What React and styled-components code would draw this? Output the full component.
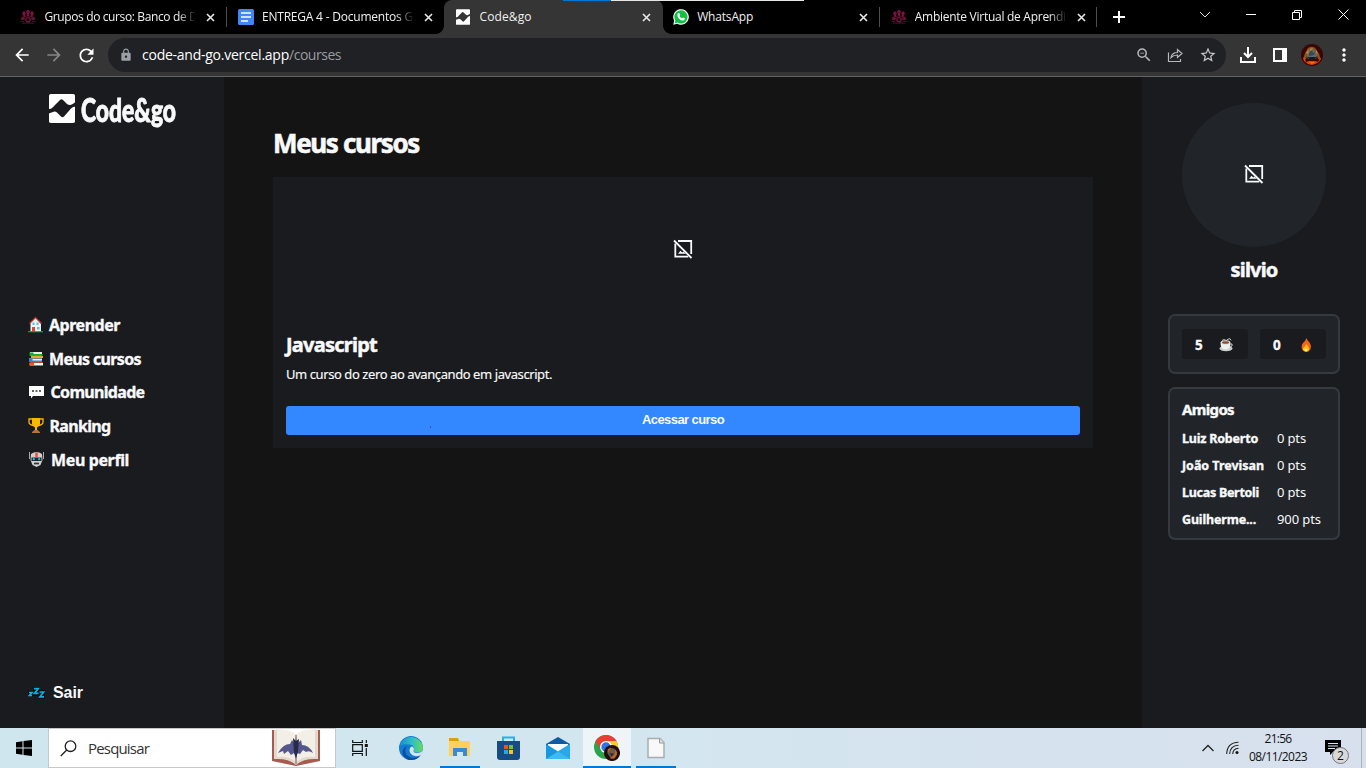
import React, { useLayoutEffect, useRef } from "react";
import styled, { createGlobalStyle, css } from "styled-components";
import {
  MdArrowBack,
  MdArrowForward,
  MdRefresh,
  MdLock,
  MdZoomOut,
  MdStarBorder,
  MdMoreVert,
} from "react-icons/md";

const c = {
  side: "#1a1b1e",
  main: "#141414",
  panel: "#212529",
  border: "#343a40",
  text: "#f8f9fa",
  blue: "#3388ff",
};
const appFont = `"Noto Sans", "Open Sans", sans-serif`;
const systemFont = `"Open Sans", "Noto Sans", sans-serif`;

const GlobalStyle = createGlobalStyle`
  *, *::before, *::after { box-sizing: border-box; }
  body { margin: 0; background: ${c.main}; overflow: hidden; }
  svg { display: block; flex: none; }
`;

/* Text whose tracking (or horizontal scale) is computed so it spans a given width. */
const FitSpan = styled.span`
  display: inline-block;
  justify-self: start;
  white-space: pre;
  transform-origin: 0 50%;
`;
function Fit({ w, squeeze, children }) {
  const ref = useRef(null);
  useLayoutEffect(() => {
    const el = ref.current;
    el.style.letterSpacing = "0px";
    el.style.transform = "none";
    const natural = el.getBoundingClientRect().width;
    if (squeeze) {
      el.style.transform = `scaleX(${w / natural})`;
      el.style.marginRight = `${w - natural}px`;
    } else {
      el.style.letterSpacing = `${(w - natural) / el.textContent.length}px`;
    }
  }, [w, squeeze, children]);
  return <FitSpan ref={ref}>{children}</FitSpan>;
}

const Screen = styled.div`
  width: 1366px;
  height: 768px;
  display: flex;
  flex-direction: column;
  position: relative;
  font-family: ${appFont};
  color: ${c.text};
`;

/* ---------- browser ---------- */
const TabStrip = styled.div`
  height: 34px;
  flex: none;
  display: flex;
  background: #000;
  padding-left: 8.4px;
  font-family: ${systemFont};
`;
const Tab = styled.div`
  width: 217.6px;
  height: 34px;
  flex: none;
  display: flex;
  align-items: center;
  padding-left: 12px;
  gap: 8px;
  position: relative;
  isolation: isolate;
  ${(p) =>
    p.$divider &&
    css`
      &::after {
        content: "";
        position: absolute;
        right: -0.9px;
        top: 7px;
        width: 1px;
        height: 20px;
        background: #4d4d4d;
      }
    `}
  ${(p) =>
    p.$active &&
    css`
      &::before {
        content: "";
        position: absolute;
        z-index: -1;
        inset: 0 -1.4px 0 0.4px;
        background: #353535;
        border-radius: 8px 8px 0 0;
      }
      &::after {
        content: "";
        position: absolute;
        z-index: -1;
        left: -7.6px;
        right: -9.4px;
        bottom: 0;
        height: 8px;
        background:
          radial-gradient(circle at 0 0, transparent 7.5px, #353535 8px) 0 0 / 8px 8px no-repeat,
          radial-gradient(circle at 100% 0, transparent 7.5px, #353535 8px) 100% 0 / 8px 8px no-repeat;
      }
    `}
`;
const TabTitle = styled.div`
  width: 152px;
  overflow: hidden;
  font-size: 12px;
  line-height: 18px;
  color: #f0f0f0;
  white-space: nowrap;
  ${(p) => p.$fade && css`mask-image: linear-gradient(90deg, #000 134px, transparent 152px);`}
`;
const TabClose = styled.svg`
  margin-left: 2px;
`;
const NewTab = styled.div`
  width: 45px;
  display: grid;
  place-items: center;
`;
const WindowButtons = styled.div`
  margin-left: auto;
  display: flex;
  height: 29px;
`;
const WindowButton = styled.div`
  width: 46px;
  display: grid;
  place-items: center;
`;
const WindowEdge = styled.div`
  position: absolute;
  top: 0;
  left: 563px;
  width: 241px;
  height: 1px;
  background: linear-gradient(90deg, #0078d7 48px, #e6e6e6 48px);
`;
const Toolbar = styled.div`
  height: 43px;
  flex: none;
  display: flex;
  align-items: center;
  padding: 0 11px 0 12px;
  background: #353535;
  border-bottom: 1px solid #636363;
`;
const ToolButton = styled.div`
  width: ${(p) => p.$w || 32}px;
  display: flex;
  justify-content: ${(p) => p.$align || "flex-start"};
  color: ${(p) => p.$color || "#fff"};
`;
const AddressBar = styled.div`
  width: 1118px;
  height: 34px;
  display: flex;
  align-items: center;
  padding: 0 9px 0 11px;
  border-radius: 17px;
  background: #202124;
  font: 14px/20px ${systemFont};
`;
const Url = styled.div`
  flex: 1;
  margin-left: 9px;
  color: #fff;
`;
const UrlPath = styled.span`
  color: #9a9ba0;
`;

/* ---------- page ---------- */
const Page = styled.div`
  height: 651px;
  display: flex;
  background: ${c.main};
`;
const Sidebar = styled.aside`
  width: 224px;
  flex: none;
  display: flex;
  flex-direction: column;
  background: ${c.side};
`;
const Brand = styled.div`
  height: 62px;
  display: flex;
  align-items: center;
  padding-left: 49px;
  gap: 6px;
`;
const BrandName = styled.div`
  padding-top: 3px;
  font: 900 32px/40px Lato, sans-serif;
  -webkit-text-stroke: 0.9px ${c.text};
`;
const Nav = styled.nav`
  padding: 169px 0 0 28px;
`;
const NavItem = styled.div`
  height: 33.7px;
  display: flex;
  align-items: center;
  gap: ${(p) => p.$gap}px;
  font: bold 16px/22px ${(p) => (p.$plain ? `"Liberation Sans", sans-serif` : appFont)};
  -webkit-text-stroke: ${(p) => (p.$plain ? 0 : 0.35)}px ${c.text};
  ${(p) => p.$bottom && css`margin: auto 0 18px 28px;`}
`;
const Content = styled.main`
  width: 918px;
  padding: 49px 49px 0;
`;
const Title = styled.h1`
  margin: 0 0 17px;
  font: bold 26px/34px ${appFont};
  -webkit-text-stroke: 0.6px ${c.text};
`;
const Card = styled.section`
  height: 271px;
  background: ${c.side};
`;
const CardImage = styled.div`
  height: 145px;
  padding-bottom: 1px;
  display: grid;
  place-items: center;
`;
const CardBody = styled.div`
  padding: 9px 13px 0;
`;
const CardTitle = styled.h2`
  margin: 0;
  font: bold 20px/28px ${appFont};
  -webkit-text-stroke: 0.5px ${c.text};
`;
const CardText = styled.p`
  margin: 5px 0 21px;
  font-size: 13px;
  line-height: 21px;
  -webkit-text-stroke: 0.15px ${c.text};
`;
const CardButton = styled.button`
  display: block;
  position: relative;
  width: 100%;
  height: 29px;
  padding: 0 0 2px;
  border: 0;
  border-radius: 3px;
  background: ${c.blue};
  color: ${c.text};
  font: bold 13px/20px "Liberation Sans", sans-serif;
  &::after {
    content: "";
    position: absolute;
    left: 144px;
    top: 20px;
    width: 1px;
    height: 2px;
    background: #4a45d8;
  }
`;
const Profile = styled.aside`
  width: 224px;
  padding: 26px 26px 0;
  background: ${c.side};
`;
const Avatar = styled.div`
  width: 144px;
  height: 144px;
  margin: 0 auto;
  padding-bottom: 2px;
  border-radius: 50%;
  background: ${c.panel};
  display: grid;
  place-items: center;
`;
const UserName = styled.h2`
  margin: 9px 0 30px;
  text-align: center;
  font: bold 20px/28px ${appFont};
  -webkit-text-stroke: 0.5px ${c.text};
`;
const Panel = styled.section`
  border: 2px solid ${c.border};
  border-radius: 7px;
  background: ${c.panel};
`;
const Stats = styled(Panel)`
  height: 60px;
  padding: 13px 12px;
  display: flex;
  gap: 12px;
`;
const Stat = styled.div`
  width: 66px;
  height: 30px;
  padding: 1px ${(p) => p.$end}px 0 13px;
  display: flex;
  align-items: center;
  justify-content: space-between;
  border-radius: 3px;
  background: ${c.side};
  font: bold 13.5px/20px ${appFont};
  -webkit-text-stroke: 0.3px ${c.text};
`;
const Friends = styled(Panel)`
  height: 153px;
  margin-top: 13px;
  padding: 9px 12px;
`;
const FriendsTitle = styled.h3`
  margin: 0 0 5px;
  font: bold 15px/22px ${appFont};
  -webkit-text-stroke: 0.4px ${c.text};
`;
const Friend = styled.div`
  height: 27px;
  display: grid;
  grid-template-columns: 95px 1fr;
  font-size: 13px;
  line-height: 27px;
`;
const FriendName = styled.b`
  font-size: 12.5px;
  -webkit-text-stroke: 0.35px ${c.text};
`;

/* ---------- taskbar ---------- */
const Taskbar = styled.footer`
  height: 40px;
  flex: none;
  display: flex;
  background: linear-gradient(90deg, #cfe6ee, #d3e6ef 45%, #d8e0ee);
  font-family: ${systemFont};
  color: #111;
`;
const StartButton = styled.div`
  width: 48px;
  display: grid;
  place-items: center;
`;
const SearchBox = styled.div`
  width: 288px;
  border: 1px solid #c8c8c8;
  background: #fff;
  display: flex;
  align-items: center;
  padding: 0 15px 0 11px;
  font-size: 15px;
  color: #333;
`;
const SearchText = styled.div`
  flex: 1;
  margin-left: 11px;
`;
const TaskButton = styled.div`
  width: ${(p) => p.$w || 48}px;
  margin-right: ${(p) => p.$gap || 0}px;
  display: grid;
  place-items: center;
  ${(p) => p.$active && css`background: #edf5f9;`}
  ${(p) => p.$open && css`box-shadow: inset 0 -2px #0078d7;`}
`;
const Tray = styled.div`
  margin-left: auto;
  display: flex;
  align-items: center;
`;
const Clock = styled.div`
  width: 60px;
  margin: 0 17px 0 9px;
  text-align: center;
  font-size: 12px;
  line-height: 18px;
  white-space: nowrap;
`;
const NoticeIcon = styled.div`
  width: 36px;
  height: 40px;
  position: relative;
  padding: 12px 0 0;
`;
const NoticeCount = styled.div`
  position: absolute;
  left: 7px;
  top: 19px;
  width: 17px;
  height: 17px;
  border: 1px solid #777;
  border-radius: 50%;
  background: #d9d9dc;
  font-size: 12px;
  line-height: 15px;
  text-align: center;
`;
const DesktopEdge = styled.div`
  width: 5px;
  height: 40px;
  border-left: 1px solid #aab2be;
`;

/* ---------- drawings ---------- */
const Crest = () => (
  <svg width="16" height="16" viewBox="0 0 16 16" fill="#7c1040">
    <path d="M7 1h2l1 2-1 1.500v2l1 1H6l1-1v-2L6 3zM3 2.500h2l.8 2L5 6l1 2H3.500L3 6 2 4.500zM13 2.500h-2l-.8 2L11 6l-1 2h2.500L13 6l1-1.500z" />
    <path d="M.8 9l2-1.500L5 9l-.5 2H1zM15.200 9l-2-1.500L11 9l.5 2H15z" opacity=".85" />
    <circle cx="8" cy="10.700" r="2.200" fill="none" stroke="#8e1243" strokeWidth="1.200" />
    <path d="M0 12h4v1H0zM12 12h4v1h-4zM2 13.600h12v1.200H2z" opacity=".6" />
  </svg>
);
const Docs = () => (
  <svg width="16" height="16"><rect width="16" height="16" rx="1.5" fill="#4285f4" /><path d="M3 4h10M3 8h10M3 12h7" stroke="#fff" strokeWidth="1.700" /></svg>
);
const LogoMark = ({ w = 26, h = 29, cut = c.side }) => (
  <svg width={w} height={h} viewBox="0 0 26 29">
    <rect width="26" height="29" rx="1.700" fill="#fff" />
    <path d="M0 15C3 15 4 13 5.500 11.500L11 6q1.500-1.500 3 0l4 4q2 1.500 4 .8 2.500-.8 4-2.500v4.500c-3 0-4 2-5.500 3.500L15 22.500q-1.500 1.500-3 0l-4-4q-2-1.500-4-.5-2.500.8-4 1.500z" fill={cut} />
  </svg>
);
const Whats = () => (
  <svg width="16" height="16" viewBox="0 0 16 16">
    <path d="M.2 15.800l1-4A7.800 7.800 0 1 1 4.200 14.800z" fill="#fff" />
    <path d="M1.600 14.400l.8-2.900A6.600 6.600 0 1 1 4.600 13.600z" fill="#12c143" />
    <path d="M5.300 4l1-.1.9 2-.8 1.200q.9 1.800 2.700 2.500l.9-1.100 2 1q0 1.700-1.700 2.100C7 11.500 4.500 8.500 4.400 5.900 4.400 5 4.800 4.300 5.300 4z" fill="#fff" />
  </svg>
);
const CloseX = () => (
  <TabClose width="9" height="9" viewBox="0 0 9 9"><path d="M1 1l7 7M8 1L1 8" stroke="#e8e8e8" strokeWidth="1.600" /></TabClose>
);
const NoImage = () => (
  <svg width="20" height="20" viewBox="0 0 20 20" fill="none" stroke={c.text} strokeWidth="1.800">
    <path d="M5 2h13.200v13M2.300 4.500v13.200h13" />
    <path d="M1 1.500L18.500 19" />
    <path d="M5 14.700l2.500-3 1.700 1.700 1-1 2.800 2.300z" fill={c.text} stroke="none" />
  </svg>
);
const House = () => (
  <svg width="16" height="17" viewBox="0 0 16 17">
    <path d="M2.500 7l5-5L13 8v8H2.500z" fill="#f3f3f3" />
    <path d="M1.500 7.500L7.500 1.500l6 6" fill="none" stroke="#c9382b" strokeWidth="1.200" />
    <path d="M4 11h3v5H4z" fill="#e04430" /><path d="M4.500 6.500h2V9h-2zM8.500 6.500h2V9h-2zM9 11h2.500v2.500H9z" fill="#4cc3ee" />
    <path d="M0 15.700h15" stroke="#15a52c" strokeWidth="1.200" />
  </svg>
);
const Books = () => (
  <svg width="16" height="16" viewBox="0 0 16 16">
    <path d="M2 1h12v3.500H2z" fill="#eee" /><path d="M1.500 1.500h4V3h9v1.500h-13z" fill="#18a832" />
    <path d="M3 5h12v2H3z" fill="#d6b32c" />
    <path d="M1 7.500h13V11H1z" fill="#e9f1f6" /><path d="M1 7.500h3.500V9.500H14V11H1z" fill="#2786d1" />
    <path d="M2 11.300h13V15H2q-2-1.800 0-3.700z" fill="#ef5721" /><path d="M6 12h9v2H6z" fill="#fff" />
  </svg>
);
const Speech = () => (
  <svg width="17" height="16" viewBox="0 0 17 16"><path d="M1 2h15v10H5l-2 2.500V12H1z" fill="#fff" /><path d="M4 6.200h2v1.600H4zM7.500 6.200h2v1.600h-2zM11 6.200h2v1.600h-2z" fill="#333" /></svg>
);
const Trophy = () => (
  <svg width="16" height="17" viewBox="0 0 16 17">
    <path d="M4 1h8v6q-.5 3-3 3.500V14H7v-3.500Q4.500 10 4 7z" fill="#fdb602" />
    <path d="M4 2H1v3q0 2.500 4 3.500M12 2h3v3q0 2.500-4 3.500" fill="none" stroke="#fdb602" strokeWidth="1.300" />
    <path d="M6.500 13h3l2.500 2v1H4v-1z" fill="#b67430" />
  </svg>
);
const Robot = () => (
  <svg width="17" height="17" viewBox="0 0 17 17">
    <path d="M1.500 1v7M15.500 1v7" stroke="#aaa" /><path d="M3 3q5.500-4 11 0l.5 6-2 5-4 2-4-2-2-5z" fill="#cfcfcf" />
    <path d="M7.300 1.500h2.400V6H7.300z" fill="#f04a2e" /><path d="M3.500 6.500h10v3.500h-10z" fill="#20242b" /><circle cx="5.800" cy="8.200" r="1.100" fill="#23c4ee" /><circle cx="11.200" cy="8.200" r="1.100" fill="#23c4ee" />
    <path d="M6 12.500h5" stroke="#333" strokeWidth="1.700" />
  </svg>
);
const Zzz = () => (
  <svg width="17" height="12" viewBox="0 0 17 12" fill="none">
    <path d="M0 4h5.500V0H12v3h5v8.500h-6.500V9H0z" fill="#080808" />
    <path d="M1 5.500h3L1.300 8.500H4M6 1.700h4.200L6.400 6.400h4.200M11.500 5h4.200l-3.900 4.800h4.200" stroke="#0bb3e2" strokeWidth="1.700" />
  </svg>
);
const Coffee = () => (
  <svg width="14" height="14" viewBox="0 0 14 14">
    <ellipse cx="7" cy="10.500" rx="6.500" ry="2.800" fill="#ccc" /><path d="M1.500 4.500h10q0 7-5 7t-5-7z" fill="#efefef" />
    <ellipse cx="6.500" cy="4.500" rx="4.800" ry="2.200" fill="#ddd" /><ellipse cx="6.500" cy="4.500" rx="3.500" ry="1.300" fill="#8e4b2c" />
    <path d="M11 6h2v2l-2 1M3 2.500Q5 .8 6 2t3-.7 3 1" stroke="#ccc" fill="none" />
  </svg>
);
const Flame = () => (
  <svg width="14" height="16" viewBox="0 0 14 16">
    <path d="M7.500 1Q8 3.500 10.500 5.500q2.500 4 .5 7.500-3.500 4-7.500 0Q1.500 9 4 6q2.500-2 3.500-5z" fill="#f5641d" />
    <path d="M7 7q3.500 3 3 6-3 3-6 0-.5-2 1.200-3Q7 9 7 7z" fill="#ffc20d" /><circle cx="7" cy="13" r="1.300" fill="#fff59b" />
  </svg>
);
const Warrior = ({ s = 22 }) => (
  <svg width={s} height={s} viewBox="0 0 22 22">
    <circle cx="11" cy="11" r="11" fill="#3a0505" />
    <path d="M2 15Q4 8 7 4q5-3 8 1 4 5 5 11l-3-1-1-3H6l-1 3z" fill="#8f5212" />
    <path d="M6 12Q6 6 10 4q4 0 6 7l-1 4H7z" fill="#5d6c72" />
    <path d="M5 9l3-4-1 5zM9 5l3-1-2 3zM15 6l2 4-2-1z" fill="#d98a24" />
    <path d="M8 9l3-3 1 3 2-1-1 3-5 1z" fill="#3c484d" />
    <path d="M2 14l2 0 1 4 3-1 6 0 3 1 2-4 1 0-2 4-4 2-3 1-4-1-4-3z" fill="#d8430f" />
    <path d="M7 13h8l-1 3H8z" fill="#17191b" /><path d="M8 18h6l-3 2z" fill="#f1701c" />
  </svg>
);
const BookArt = () => (
  <svg width="48" height="38" viewBox="0 0 48 38">
    <path d="M0 1h7l17 5L41 1h7v31L24 37 0 32z" fill="#a65a50" />
    <path d="M2 1Q17 0 24 6 31 0 46 1v29q-15-1-22 6Q17 29 2 30z" fill="#e0d9ce" />
    <path d="M5 1Q17 0 24 6v27Q17 27 5 28zM43 1Q31 0 24 6v27q7-6 19-5z" fill="#f3eee6" />
    <path d="M24 6v29" stroke="#aaa096" strokeWidth="2" />
    <path d="M6 24q5-9 12-9l2-4 3 4 1-7 1 7 4-4 1 5q7 0 11 8-4-3-7-1l-3-2-3 4-3-1-1 6-2-6-3 2-3-4-4 3-1-3z" fill="#55568c" />
    <path d="M21 9l3 3 3-2-1 13-2 6-2-6z" fill="#29294a" />
  </svg>
);
const Edge = () => (
  <svg width="24" height="24" viewBox="0 0 24 24">
    <defs><linearGradient id="edgeTop"><stop stopColor="#168ed0" /><stop offset=".55" stopColor="#32bfc4" /><stop offset="1" stopColor="#69dc55" /></linearGradient></defs>
    <circle cx="12" cy="12" r="12" fill="#137bd0" />
    <path d="M.5 10A12 12 0 0 1 24 11.500q0 5-6 5-4 0-3.200-2.500Q16 9 10 8.500 4 7.500.5 10z" fill="url(#edgeTop)" />
    <path d="M8 10q-4 6 1 10 5 4 12 0-4 5-12 3.700Q2 20 4 14q1-3 4-4z" fill="#0b4f9d" />
    <path d="M12 10.500q3.500 0 2.800 3.500Q13.500 17 18 17q4 0 6-3-.3 3.500-2.300 5.300Q15 21.500 12 18t0-7.500z" fill="#d2e6ee" />
  </svg>
);
const Explorer = () => (
  <svg width="22" height="20" viewBox="0 0 22 20"><path d="M0 1h9l2 2h10v15H0z" fill="#ffd15c" /><path d="M0 0h9l1 3H0z" fill="#dd9d0c" /><path d="M4 18v-8h14v8h-4v-4H8v4z" fill="#368bd5" /><path d="M8 14h6v5H8z" fill="#d2e6ee" /></svg>
);
const Store = () => (
  <svg width="23" height="24" viewBox="0 0 23 24"><path d="M6 6V1.500h11V6" fill="none" stroke="#28b0e8" strokeWidth="2" /><path d="M0 5h23v16q0 3-3 3H3q-3 0-3-3z" fill="#184b82" /><path d="M7 9h4v4H7z" fill="#f45126" /><path d="M12 9h4v4h-4z" fill="#81bd23" /><path d="M7 14h4v4H7z" fill="#22aaf0" /><path d="M12 14h4v4h-4z" fill="#ffc11b" /></svg>
);
const Mail = () => (
  <svg width="24" height="23" viewBox="0 0 24 23"><path d="M0 7l12-7 12 7v5H0z" fill="#0c5ba5" /><path d="M2 7h20v7L12 18 2 13z" fill="#f7fbfd" /><path d="M0 7l24 15H0z" fill="#1697e0" /><path d="M24 7v15H6L0 22z" fill="#3abbf3" /><path d="M24 7L12 14.500 24 22z" fill="#26a8e9" /></svg>
);
const Chrome = () => (
  <svg width="26" height="26" viewBox="0 0 26 26">
    <circle cx="12" cy="12" r="12" fill="#2ba24c" /><path d="M1.600 6A12 12 0 0 1 22.400 6H12L7 15z" fill="#e8402f" /><path d="M12 6h10.400A12 12 0 0 1 12 24l5-9z" fill="#fccb25" />
    <circle cx="12" cy="12" r="6" fill="#fff" /><circle cx="12" cy="12" r="4.700" fill="#2f74e6" />
    <g transform="translate(10 10) scale(.73)"><circle cx="11" cy="11" r="11" fill="#210c0a" /><path d="M5 12Q3 5 9 4q7 0 9 6l-3 7-5 2z" fill="#6c594c" /><path d="M5 6l5-3-4 7zM16 6l2 7-4 6-6-1 6-4z" fill="#c2661b" /><path d="M8 11l6 1-4 4z" fill="#252a2d" /></g>
  </svg>
);
const FileIcon = () => (
  <svg width="18" height="22" viewBox="0 0 18 22"><path d="M1 1.500h12l4 4v15H1z" fill="#f8f8f8" stroke="#a7adb1" strokeWidth="1.500" /><path d="M12.500 1.500V6H17" fill="#ddd" stroke="#969ca0" /></svg>
);

const tabs = [
  { icon: <Crest />, title: "Grupos do curso: Banco de D", w: 153, fade: true, divider: true },
  { icon: <Docs />, title: "ENTREGA 4 - Documentos G", w: 151, fade: true },
  { icon: <LogoMark w={14} h={16} cut="#353535" />, title: "Code&go", w: 52, active: true },
  { icon: <Whats />, title: "WhatsApp", w: 56, divider: true },
  { icon: <Crest />, title: "Ambiente Virtual de Aprendi", w: 151, fade: true, divider: true },
];
const links = [
  { icon: <House />, label: "Aprender", w: 71, gap: 5 },
  { icon: <Books />, label: "Meus cursos", w: 92, gap: 5 },
  { icon: <Speech />, label: "Comunidade", w: 94, gap: 5.5 },
  { icon: <Trophy />, label: "Ranking", w: 61, gap: 5.5 },
  { icon: <Robot />, label: "Meu perfil", w: 78, gap: 6 },
];
const friends = [
  ["Luiz Roberto", 76, "0 pts", 29],
  ["João Trevisan", 82, "0 pts", 29],
  ["Lucas Bertoli", 77, "0 pts", 29],
  ["Guilherme...", 74, "900 pts", 44],
];

export default function App() {
  return (
    <Screen>
      <GlobalStyle />
      <TabStrip>
        {tabs.map((t, i) => (
          <Tab key={i} $active={t.active} $divider={t.divider}>
            <svg width="16" height="16">{t.icon}</svg>
            <TabTitle $fade={t.fade}><Fit w={t.w}>{t.title}</Fit></TabTitle>
            <CloseX />
          </Tab>
        ))}
        <NewTab><svg width="12" height="12"><path d="M6 0v12M0 6h12" stroke="#fff" strokeWidth="2" /></svg></NewTab>
        <WindowButtons>
          <WindowButton><svg width="12" height="8"><path d="M1 1l5 5 5-5" fill="none" stroke="#ddd" /></svg></WindowButton>
          <WindowButton><svg width="10" height="2"><path d="M0 .5h10" stroke="#fff" /></svg></WindowButton>
          <WindowButton><svg width="10" height="10" fill="none" stroke="#fff"><path d="M.5 2.500h7v7h-7zM2.500 2.500v-2h7v7h-2" /></svg></WindowButton>
          <WindowButton><svg width="11" height="11"><path d="M.5.5l10 10M10.500.5l-10 10" stroke="#fff" /></svg></WindowButton>
        </WindowButtons>
      </TabStrip>
      <WindowEdge />
      <Toolbar>
        <ToolButton><MdArrowBack size={20} /></ToolButton>
        <ToolButton $color="#868686"><MdArrowForward size={20} /></ToolButton>
        <ToolButton><MdRefresh size={21} /></ToolButton>
        <AddressBar>
          <ToolButton $w={14} $color="#9aa0a6"><MdLock size={14} /></ToolButton>
          <Url><Fit w={147}>code-and-go.vercel.app</Fit><UrlPath><Fit w={52}>/courses</Fit></UrlPath></Url>
          <ToolButton $color="#b6b8bb"><MdZoomOut size={18} /></ToolButton>
          <ToolButton $color="#b6b8bb">
            <svg width="17" height="16" viewBox="0 0 17 16" fill="none" stroke="currentColor" strokeWidth="1.200"><path d="M1.500 5.500v9h12V12M4 10.500Q5 5.500 10.500 5.500V2.500l4.500 4-4.500 4V8Q6.500 8 4 10.500z" /></svg>
          </ToolButton>
          <ToolButton $w={18} $color="#c6c8ca"><MdStarBorder size={18} /></ToolButton>
        </AddressBar>
        <ToolButton $w={44} $align="center">
          <svg width="16" height="16" fill="none" stroke="#fff" strokeWidth="2"><path d="M8 0v10M4 6l4 4 4-4M1 10v5h14v-5" /></svg>
        </ToolButton>
        <ToolButton $w={20} $align="center"><svg width="14" height="14"><path d="M1 1h12v12H1z" fill="none" stroke="#fff" strokeWidth="2" /><path d="M9 0h5v14H9z" fill="#fff" /></svg></ToolButton>
        <ToolButton $w={44} $align="center"><Warrior /></ToolButton>
        <ToolButton $w={20} $align="center"><MdMoreVert size={20} /></ToolButton>
      </Toolbar>

      <Page>
        <Sidebar>
          <Brand><LogoMark /><BrandName><Fit w={95} squeeze>Code&amp;go</Fit></BrandName></Brand>
          <Nav>
            {links.map((l) => (
              <NavItem key={l.label} $gap={l.gap}>{l.icon}<Fit w={l.w}>{l.label}</Fit></NavItem>
            ))}
          </Nav>
          <NavItem $bottom $plain $gap={8}><Zzz /><Fit w={30}>Sair</Fit></NavItem>
        </Sidebar>
        <Content>
          <Title><Fit w={146}>Meus cursos</Fit></Title>
          <Card>
            <CardImage><NoImage /></CardImage>
            <CardBody>
              <CardTitle><Fit w={91}>Javascript</Fit></CardTitle>
              <CardText><Fit w={266}>Um curso do zero ao avançando em javascript.</Fit></CardText>
              <CardButton><Fit w={82}>Acessar curso</Fit></CardButton>
            </CardBody>
          </Card>
        </Content>
        <Profile>
          <Avatar><NoImage /></Avatar>
          <UserName><Fit w={47}>silvio</Fit></UserName>
          <Stats>
            <Stat $end={15}>5<Coffee /></Stat>
            <Stat $end={13}>0<Flame /></Stat>
          </Stats>
          <Friends>
            <FriendsTitle><Fit w={52}>Amigos</Fit></FriendsTitle>
            {friends.map(([name, w, pts, pw]) => (
              <Friend key={name}><FriendName><Fit w={w}>{name}</Fit></FriendName><Fit w={pw}>{pts}</Fit></Friend>
            ))}
          </Friends>
        </Profile>
      </Page>

      <Taskbar>
        <StartButton><svg width="16" height="16"><path d="M0 2.200L6.500 1.300v6.200H0zM7.500 1.100L16 0v7.500H7.500zM0 8.500h6.500v6.200L0 13.800zM7.500 8.500H16V16l-8.500-1.100z" fill="#000" /></svg></StartButton>
        <SearchBox>
          <svg width="17" height="17" fill="none" stroke="#222" strokeWidth="1.300"><circle cx="10.500" cy="6.200" r="5.300" /><path d="M6.700 10L.8 16" /></svg>
          <SearchText><Fit w={61}>Pesquisar</Fit></SearchText>
          <BookArt />
        </SearchBox>
        <TaskButton $gap={3}><svg width="16" height="16" fill="none" stroke="#111" strokeWidth="1.200"><path d="M.7 0v2.500h9.600V0M.7 4.700h9.600v6.600H.7zM.7 16v-2.500h9.600V16M14.300 0v3M14.300 8v8" /><path d="M12.800 4h3v3h-3z" fill="#111" stroke="none" /></svg></TaskButton>
        <TaskButton $gap={5}><Edge /></TaskButton>
        <TaskButton $w={40} $gap={4} $open><Explorer /></TaskButton>
        <TaskButton $gap={2}><Store /></TaskButton>
        <TaskButton $gap={1}><Mail /></TaskButton>
        <TaskButton $gap={5} $active $open><Chrome /></TaskButton>
        <TaskButton $w={40} $open><FileIcon /></TaskButton>
        <Tray>
          <svg width="12" height="8" fill="none" stroke="#222" strokeWidth="1.300"><path d="M.5 7L6 1.500 11.500 7" /></svg>
          <svg width="25" height="14" viewBox="-12 0 25 14" fill="none" stroke="#222" strokeWidth="1.100"><path d="M.7 13Q1 1.500 12.500 1.200M3.700 13Q4 4.500 12.500 4.200M6.700 13q.3-5.500 5.800-5.800" /><circle cx="11" cy="11.500" r="1.500" fill="#111" stroke="none" /></svg>
          <Clock><div><Fit w={27}>21:56</Fit></div><div><Fit w={58}>08/11/2023</Fit></div></Clock>
          <NoticeIcon>
            <svg width="16" height="16"><path d="M0 0h16v12H8l-3 3v-3H0z" fill="#000" /><path d="M3 3.500h10M3 6h10M3 8.500h7" stroke="#dce3ef" /></svg>
            <NoticeCount>2</NoticeCount>
          </NoticeIcon>
          <DesktopEdge />
        </Tray>
      </Taskbar>
    </Screen>
  );
}
